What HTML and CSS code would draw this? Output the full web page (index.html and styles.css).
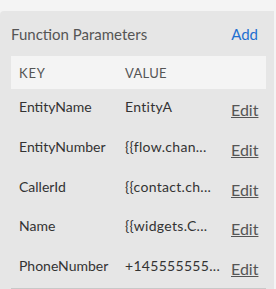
FILE: index.html
```html
<!DOCTYPE html>
<html>
<head>
<meta charset="utf-8">
<link rel="stylesheet" href="styles.css">
</head>
<body>
<div class="panel">
  <div class="title-row">
    <span class="title">Function Parameters</span>
    <a class="add">Add</a>
  </div>
  <div class="table">
    <div class="row head">
      <span class="key">KEY</span>
      <span class="val">VALUE</span>
    </div>
    <div class="row">
      <span class="key">EntityName</span>
      <span class="val">EntityA</span>
      <a class="edit">Edit</a>
    </div>
    <div class="row">
      <span class="key">EntityNumber</span>
      <span class="val">{{flow.chan...</span>
      <a class="edit">Edit</a>
    </div>
    <div class="row">
      <span class="key">CallerId</span>
      <span class="val">{{contact.ch...</span>
      <a class="edit">Edit</a>
    </div>
    <div class="row">
      <span class="key">Name</span>
      <span class="val">{{widgets.C...</span>
      <a class="edit">Edit</a>
    </div>
    <div class="row last">
      <span class="key">PhoneNumber</span>
      <span class="val">+145555555...</span>
      <a class="edit">Edit</a>
    </div>
  </div>
</div>
</body>
</html>
```
FILE: styles.css
```css
html, body {
  margin: 0;
  padding: 0;
  background: #f4f4f4;
  font-family: Lato, "Open Sans", sans-serif;
  width: 276px;
  height: 289px;
  overflow: hidden;
}
.panel {
  margin-top: 11px;
  margin-right: 2px;
  background: #e6e6e6;
  border-top-left-radius: 4px;
  padding: 0 8px 0 11px;
  height: 278px;
  box-sizing: border-box;
}
.title-row {
  display: flex;
  justify-content: space-between;
  align-items: center;
  height: 45px;
  padding-right: 8px;
}
.title {
  font-size: 15px;
  color: #555;
}
.add {
  font-size: 15px;
  color: #1f6fd1;
}
.table {
  border-bottom: 1px solid #c8c8c8;
}
.row {
  display: flex;
  align-items: flex-start;
  height: 39.8px;
  box-sizing: border-box;
  padding: 9px 0 0 8px;
  font-size: 14px;
  color: #333;
}
.row.head {
  background: #f4f4f4;
  height: 33px;
  align-items: center;
  padding-top: 0;
  font-size: 13px;
  letter-spacing: 0.8px;
  color: #555;
}
.key {
  width: 106px;
}
.val {
  width: 106px;
  letter-spacing: 0.3px;
}
.edit {
  margin-top: 2px;
  color: #555;
  text-decoration: underline;
  font-size: 16px;
}
```
